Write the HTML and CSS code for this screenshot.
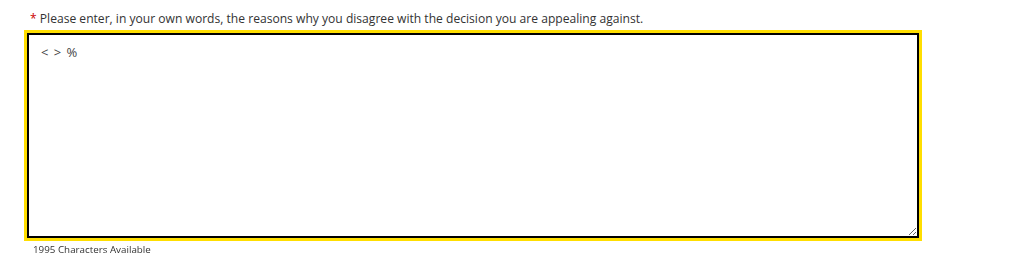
FILE: index.html
```html
<!DOCTYPE html>
<html>
<head>
<meta charset="utf-8">
<link rel="stylesheet" href="styles.css">
</head>
<body>
<div class="field">
  <label class="label" for="reasons"><span class="req">*</span> Please enter, in your own words, the reasons why you disagree with the decision you are appealing against.</label>
  <textarea id="reasons" class="input" autofocus>&lt; &gt; %</textarea>
  <div class="counter">1995 Characters Available</div>
</div>
</body>
</html>
```
FILE: styles.css
```css
html, body {
  margin: 0;
  padding: 0;
  background: #fff;
}
body {
  font-family: "Open Sans", "Liberation Sans", sans-serif;
  color: #333;
}
.field {
  padding: 10px 0 0 27px;
  display: flex;
  flex-direction: column;
  align-items: flex-start;
}
.label {
  font-size: 12.1px;
  line-height: 18px;
  padding-left: 3px;
  color: #333;
}
.req {
  color: #c00;
}
.input {
  box-sizing: border-box;
  margin-top: 5px;
  width: 892px;
  height: 205px;
  border: 2px solid #000;
  outline: 3px solid #ffde00;
  outline-offset: 0;
  font-family: "Open Sans", "Liberation Sans", sans-serif;
  font-size: 13px;
  letter-spacing: 1px;
  color: #444;
  caret-color: #000;
  padding: 8px 12px;
  resize: vertical;
}
.counter {
  font-size: 9.8px;
  line-height: 14px;
  margin-top: 5px;
  padding-left: 6px;
  color: #333;
}
```
